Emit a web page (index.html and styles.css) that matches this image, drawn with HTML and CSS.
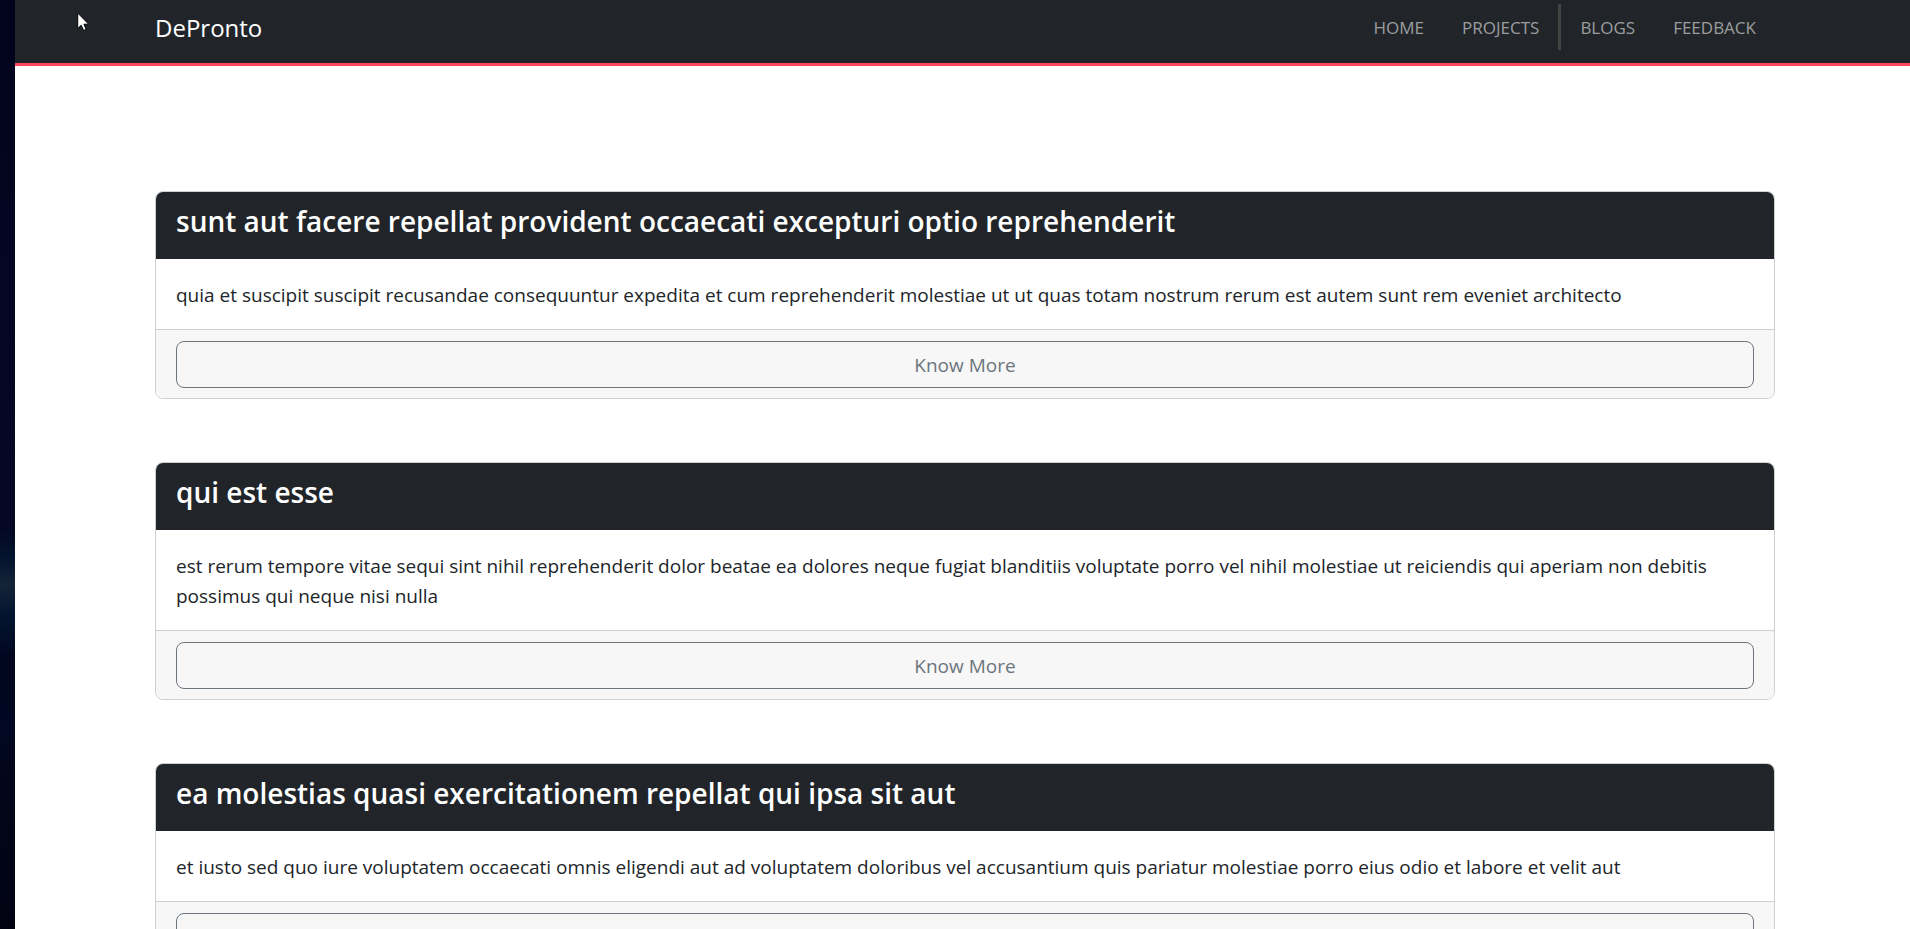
FILE: index.html
```html
<!DOCTYPE html>
<html lang="en">
<head>
<meta charset="utf-8">
<meta name="viewport" content="width=device-width, initial-scale=1">
<title>DePronto</title>
<link rel="stylesheet" href="styles.css">
</head>
<body>
<div class="desktop-edge"></div>
<div class="page">
  <header class="navbar">
    <a class="brand" href="#">DePronto</a>
    <nav class="nav">
      <a class="nav-link" href="#">HOME</a>
      <a class="nav-link nav-link-divided" href="#">PROJECTS</a>
      <a class="nav-link" href="#">BLOGS</a>
      <a class="nav-link" href="#">FEEDBACK</a>
    </nav>
  </header>
  <main class="posts">
    <article class="card">
      <h2 class="card-header">sunt aut facere repellat provident occaecati excepturi optio reprehenderit</h2>
      <p class="card-body">quia et suscipit suscipit recusandae consequuntur expedita et cum reprehenderit molestiae ut ut quas totam nostrum rerum est autem sunt rem eveniet architecto</p>
      <div class="card-footer"><button class="btn" type="button">Know More</button></div>
    </article>
    <article class="card">
      <h2 class="card-header">qui est esse</h2>
      <p class="card-body">est rerum tempore vitae sequi sint nihil reprehenderit dolor beatae ea dolores neque fugiat blanditiis voluptate porro vel nihil molestiae ut reiciendis qui aperiam non debitis possimus qui neque nisi nulla</p>
      <div class="card-footer"><button class="btn" type="button">Know More</button></div>
    </article>
    <article class="card">
      <h2 class="card-header">ea molestias quasi exercitationem repellat qui ipsa sit aut</h2>
      <p class="card-body">et iusto sed quo iure voluptatem occaecati omnis eligendi aut ad voluptatem doloribus vel accusantium quis pariatur molestiae porro eius odio et labore et velit aut</p>
      <div class="card-footer"><button class="btn" type="button">Know More</button></div>
    </article>
  </main>
</div>
<svg class="pointer" width="13" height="20" viewBox="0 0 13 20" aria-hidden="true"><path d="M.7 1v15.500l3.500-3.300 2.400 5.300 2.600-1.100-2.300-5.200h4.800z" fill="#fff" stroke="#000"/></svg>
</body>
</html>
```
FILE: styles.css
```css
* {
  box-sizing: border-box;
}

body {
  margin: 0;
  display: flex;
  align-items: flex-start;
  background: #fff;
  color: #212529;
  font-family: "Open Sans", "Noto Sans", sans-serif;
  font-size: 19px;
  line-height: 30px;
}

.desktop-edge {
  position: sticky;
  top: 0;
  flex: none;
  width: 15px;
  height: 100vh;
  background: linear-gradient(#02031c 0%, #040722 30%, #040822 57%, #03142e 60%, #152337 63%, #031530 66%, #02061f 71%, #020822 79%, #02061a 84%, #010313 100%);
}

.page {
  flex: 1;
  min-width: 0;
}

.navbar {
  display: flex;
  align-items: flex-start;
  justify-content: space-between;
  padding: 4px 135px 13px 140px;
  background: #212529;
  border-bottom: 3px solid #ff4560;
}

.brand {
  padding: 9px 0 7px;
  color: #fff;
  font-size: 24px;
  text-decoration: none;
}

.nav {
  display: flex;
}

.nav-link {
  padding: 9px 19px 7px;
  color: #9b9d9f;
  font-size: 17px;
  text-decoration: none;
}

.nav-link-divided {
  border-right: 3px solid #444;
}

.posts {
  display: flex;
  flex-direction: column;
  gap: 63px;
  padding: 125px 135px 63px 140px;
}

.card {
  overflow: hidden;
  border: 1px solid #cfd0d1;
  border-radius: 8px;
}

.card-header {
  margin: 0;
  padding: 11px 20px 20px;
  background: #212529;
  color: #fff;
  font-size: 28px;
  font-weight: 600;
  line-height: 36px;
}

.card-body {
  margin: 0;
  padding: 21px 20px 19px;
}

.card-footer {
  padding: 11px 20px 10px;
  background: #f7f7f7;
  border-top: 1px solid #cfd0d1;
}

.btn {
  display: block;
  width: 100%;
  padding: 8px 12px 7px;
  background: transparent;
  border: 1px solid #6c757d;
  border-radius: 8px;
  color: #6c757d;
  font: inherit;
}

.pointer {
  position: absolute;
  top: 12px;
  left: 77px;
}
```
